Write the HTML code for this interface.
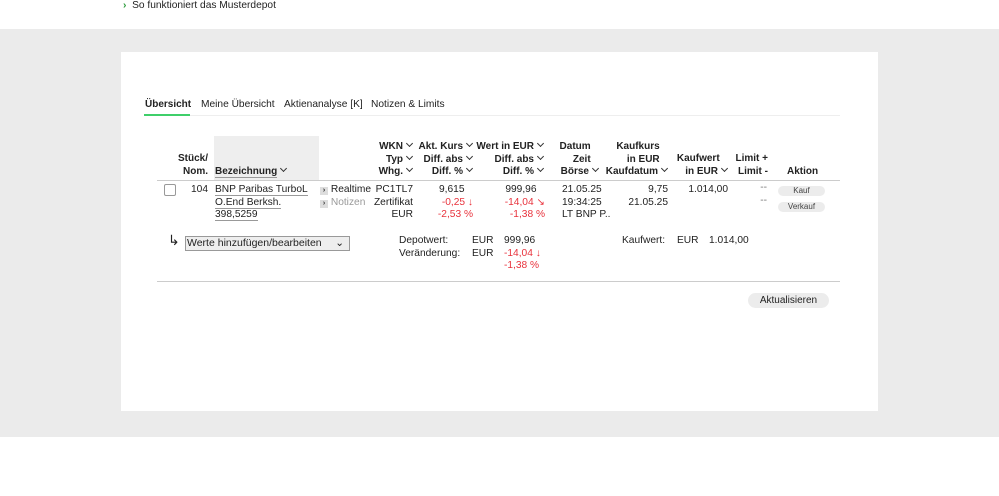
<!DOCTYPE html>
<html><head><meta charset="utf-8"><style>
body{margin:0;width:999px;height:496px;position:relative;font-family:"Liberation Sans",sans-serif;font-size:10.2px;color:#222;background:#fff;overflow:hidden}
.a{position:absolute;white-space:nowrap;line-height:12.5px}
.r{text-align:right}
.b{font-weight:bold;font-size:10px}
.red{color:#e8323c}
.c{display:inline-block;width:4px;height:4px;border-right:1.3px solid #333;border-bottom:1.3px solid #333;transform:rotate(45deg);margin-left:4px;margin-right:1px;vertical-align:3px}
.btn{position:absolute;background:#ececec;border-radius:7px;font-size:8px;color:#444;text-align:center;line-height:10px;height:10px}
.ul{border-bottom:1px solid #999}
</style></head><body>
<div class="a" style="left:123px;top:0;"><span style="color:#2c9a3c;font-weight:bold">›</span>&nbsp; So funktioniert das Musterdepot</div>
<div style="position:absolute;left:0;top:29px;width:999px;height:408px;background:#ebebeb"></div>
<div style="position:absolute;left:121px;top:52px;width:757px;height:359px;background:#fff"></div>
<div class="a b" style="left:145px;top:99px">Übersicht</div>
<div class="a" style="left:201px;top:99px">Meine Übersicht</div>
<div class="a" style="left:284px;top:99px">Aktienanalyse [K]</div>
<div class="a" style="left:371px;top:99px">Notizen &amp; Limits</div>
<div style="position:absolute;left:144px;top:115px;width:696px;height:1px;background:#eee"></div>
<div style="position:absolute;left:144px;top:114px;width:46px;height:2px;background:#3fcf6a"></div>
<div style="position:absolute;left:214px;top:136px;width:105px;height:44px;background:#eee"></div>
<div class="a b r" style="left:150px;width:58px;top:153px">Stück/<br>Nom.</div>
<div class="a b" style="left:215px;top:166px"><span class="ul">Bezeichnung</span><span class="c"></span></div>
<div class="a b r" style="left:350px;width:63px;top:141px">WKN<span class="c"></span><br>Typ<span class="c"></span><br>Whg.<span class="c"></span></div>
<div class="a b r" style="left:410px;width:63px;top:141px">Akt. Kurs<span class="c"></span><br>Diff. abs<span class="c"></span><br>Diff. %<span class="c"></span></div>
<div class="a b r" style="left:470px;width:74px;top:141px">Wert in EUR<span class="c"></span><br>Diff. abs<span class="c"></span><br>Diff. %<span class="c"></span></div>
<div class="a b r" style="left:540px;width:59px;top:141px">Datum&nbsp;&nbsp;&nbsp;<br>Zeit&nbsp;&nbsp;&nbsp;<br>Börse<span class="c"></span></div>
<div class="a b r" style="left:600px;width:68px;top:141px">Kaufkurs&nbsp;&nbsp;&nbsp;<br>in EUR&nbsp;&nbsp;&nbsp;<br>Kaufdatum<span class="c"></span></div>
<div class="a b r" style="left:660px;width:68px;top:153px">Kaufwert&nbsp;&nbsp;&nbsp;<br>in EUR<span class="c"></span></div>
<div class="a b r" style="left:720px;width:48px;top:153px">Limit +<br>Limit -</div>
<div class="a b" style="left:787px;top:166px">Aktion</div>
<div style="position:absolute;left:157px;top:180px;width:683px;height:1px;background:#ccc"></div>
<div style="position:absolute;left:164px;top:184px;width:10px;height:10px;border:1px solid #999;border-radius:2px"></div>
<div class="a r" style="left:170px;width:38px;top:184px">104</div>
<div class="a" style="left:215px;top:184px;line-height:12.7px"><span class="ul">BNP Paribas TurboL</span><br><span class="ul">O.End Berksh.</span><br><span class="ul">398,5259</span></div>
<div class="a" style="left:320px;top:184px"><span style="display:inline-block;width:8px;height:8px;background:#ddd;font-size:7px;line-height:8px;text-align:center;font-weight:bold">›</span> Realtime</div>
<div class="a" style="left:320px;top:197px;color:#999"><span style="display:inline-block;width:8px;height:8px;background:#ddd;font-size:7px;line-height:8px;text-align:center;color:#333;font-weight:bold">›</span> Notizen</div>
<div class="a r" style="left:350px;width:63px;top:184px">PC1TL7<br>Zertifikat<br>EUR</div>
<div class="a r" style="left:410px;width:63px;top:184px">9,615&nbsp;&nbsp;&nbsp;<br><span class="red">-0,25 ↓</span><br><span class="red">-2,53 %</span></div>
<div class="a r" style="left:470px;width:75px;top:184px">999,96&nbsp;&nbsp;&nbsp;<br><span class="red">-14,04 ↘</span><br><span class="red">-1,38 %</span></div>
<div class="a" style="left:562px;top:184px">21.05.25<br>19:34:25<br>LT BNP P..</div>
<div class="a r" style="left:600px;width:68px;top:184px">9,75<br>21.05.25</div>
<div class="a r" style="left:660px;width:68px;top:184px">1.014,00</div>
<div class="a r" style="left:740px;width:27px;top:182px;color:#777">--<br>--</div>
<div class="btn" style="left:778px;top:186px;width:47px">Kauf</div>
<div class="btn" style="left:778px;top:202px;width:47px">Verkauf</div>
<div class="a" style="left:168px;top:234px;font-size:14px">↳</div>
<div style="position:absolute;left:185px;top:236px;width:162px;height:13px;border:1px solid #999;background:#eee;font-size:10.5px;line-height:13px;padding-left:1px;box-sizing:content-box">Werte hinzufügen/bearbeiten<span style="position:absolute;right:5px;top:0">⌄</span></div>
<div class="a" style="left:399px;top:235px">Depotwert:<br>Veränderung:</div>
<div class="a" style="left:472px;top:235px">EUR<br>EUR</div>
<div class="a" style="left:504px;top:235px">999,96<br><span class="red">-14,04 ↓</span><br><span class="red">-1,38 %</span></div>
<div class="a" style="left:622px;top:235px">Kaufwert:</div>
<div class="a" style="left:677px;top:235px">EUR</div>
<div class="a" style="left:709px;top:235px">1.014,00</div>
<div style="position:absolute;left:157px;top:281px;width:683px;height:1px;background:#ccc"></div>
<div style="position:absolute;left:748px;top:293px;width:81px;height:15px;background:#ececec;border-radius:8px;font-size:10px;line-height:15px;text-align:center">Aktualisieren</div>
</body></html>
